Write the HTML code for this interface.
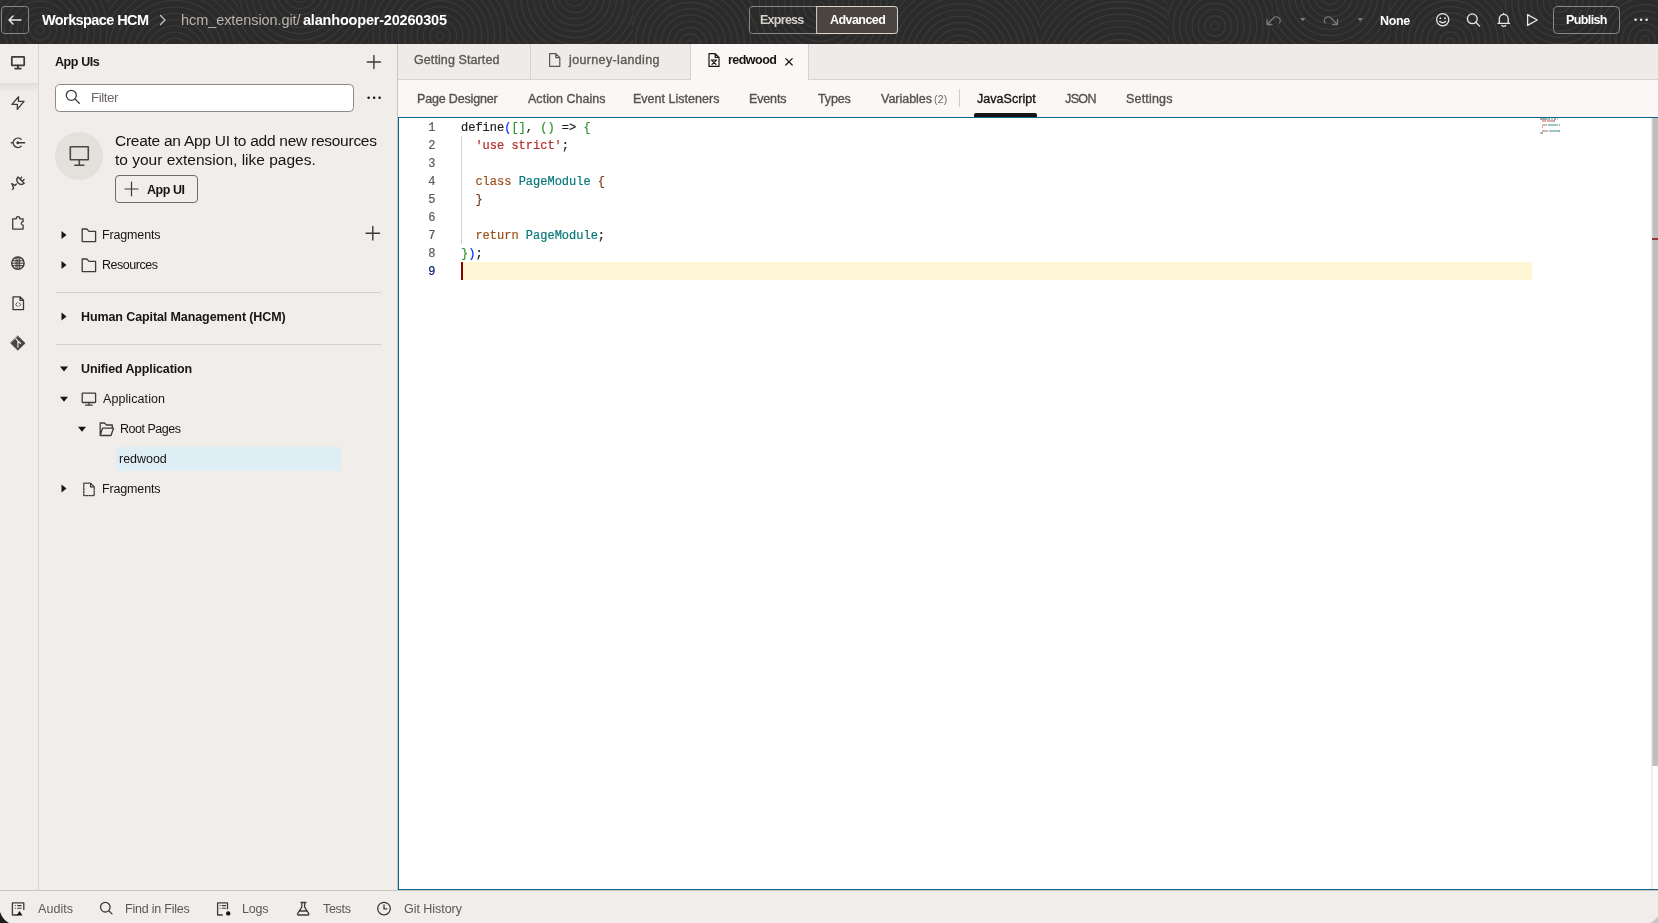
<!DOCTYPE html>
<html><head><meta charset="utf-8"><style>
*{margin:0;padding:0;box-sizing:border-box}
html,body{width:1658px;height:923px;overflow:hidden;background:#f0edeb;font-family:"Liberation Sans", sans-serif}
.a{position:absolute}
.t{position:absolute;white-space:nowrap;will-change:transform}
svg{position:absolute;overflow:visible}
</style></head><body>
<!-- header -->
<div class="a" style="left:0;top:0;width:1658px;height:44px;background:#2b2b2b"></div>
<svg class="a" style="left:0;top:0" width="1658" height="44" viewBox="0 0 1658 44"><defs><clipPath id="c0"><rect x="0" y="0" width="108" height="44"/></clipPath><clipPath id="c1"><rect x="108" y="0" width="130" height="44"/></clipPath><clipPath id="c2"><rect x="238" y="0" width="132" height="44"/></clipPath><clipPath id="c3"><rect x="370" y="0" width="138" height="44"/></clipPath><clipPath id="c4"><rect x="508" y="0" width="125" height="44"/></clipPath><clipPath id="c5"><rect x="632" y="0" width="122" height="44"/></clipPath><clipPath id="c6"><rect x="755" y="0" width="135" height="44"/></clipPath><clipPath id="c7"><rect x="890" y="0" width="150" height="44"/></clipPath><clipPath id="c8"><rect x="1040" y="0" width="128" height="44"/></clipPath><clipPath id="c9"><rect x="1168" y="0" width="105" height="44"/></clipPath><clipPath id="c10"><rect x="1272" y="0" width="118" height="44"/></clipPath><clipPath id="c11"><rect x="1390" y="0" width="115" height="44"/></clipPath><clipPath id="c12"><rect x="1505" y="0" width="98" height="44"/></clipPath><clipPath id="c13"><rect x="1602" y="0" width="56" height="44"/></clipPath></defs><g fill="none" stroke="#383838" stroke-width="1.4"><g clip-path="url(#c0)"><circle cx="40" cy="30" r="4.0"/><circle cx="40" cy="30" r="10.3"/><circle cx="40" cy="30" r="16.6"/><circle cx="40" cy="30" r="22.9"/><circle cx="40" cy="30" r="29.2"/><circle cx="40" cy="30" r="35.5"/><circle cx="40" cy="30" r="41.8"/><circle cx="40" cy="30" r="48.1"/><circle cx="40" cy="30" r="54.4"/><circle cx="40" cy="30" r="60.7"/><circle cx="40" cy="30" r="67.0"/><circle cx="40" cy="30" r="73.3"/><circle cx="40" cy="30" r="79.6"/><circle cx="40" cy="30" r="85.9"/><circle cx="40" cy="30" r="92.2"/><circle cx="40" cy="30" r="98.5"/><circle cx="40" cy="30" r="104.8"/><circle cx="40" cy="30" r="111.1"/><circle cx="40" cy="30" r="117.4"/><circle cx="40" cy="30" r="123.7"/><circle cx="40" cy="30" r="130.0"/><circle cx="40" cy="30" r="136.3"/><circle cx="40" cy="30" r="142.6"/><circle cx="40" cy="30" r="148.9"/><circle cx="40" cy="30" r="155.2"/></g><g clip-path="url(#c1)"><circle cx="175" cy="55" r="4.0"/><circle cx="175" cy="55" r="10.3"/><circle cx="175" cy="55" r="16.6"/><circle cx="175" cy="55" r="22.9"/><circle cx="175" cy="55" r="29.2"/><circle cx="175" cy="55" r="35.5"/><circle cx="175" cy="55" r="41.8"/><circle cx="175" cy="55" r="48.1"/><circle cx="175" cy="55" r="54.4"/><circle cx="175" cy="55" r="60.7"/><circle cx="175" cy="55" r="67.0"/><circle cx="175" cy="55" r="73.3"/><circle cx="175" cy="55" r="79.6"/><circle cx="175" cy="55" r="85.9"/><circle cx="175" cy="55" r="92.2"/><circle cx="175" cy="55" r="98.5"/><circle cx="175" cy="55" r="104.8"/><circle cx="175" cy="55" r="111.1"/><circle cx="175" cy="55" r="117.4"/><circle cx="175" cy="55" r="123.7"/><circle cx="175" cy="55" r="130.0"/><circle cx="175" cy="55" r="136.3"/><circle cx="175" cy="55" r="142.6"/><circle cx="175" cy="55" r="148.9"/><circle cx="175" cy="55" r="155.2"/></g><g clip-path="url(#c2)"><circle cx="300" cy="-8" r="4.0"/><circle cx="300" cy="-8" r="10.3"/><circle cx="300" cy="-8" r="16.6"/><circle cx="300" cy="-8" r="22.9"/><circle cx="300" cy="-8" r="29.2"/><circle cx="300" cy="-8" r="35.5"/><circle cx="300" cy="-8" r="41.8"/><circle cx="300" cy="-8" r="48.1"/><circle cx="300" cy="-8" r="54.4"/><circle cx="300" cy="-8" r="60.7"/><circle cx="300" cy="-8" r="67.0"/><circle cx="300" cy="-8" r="73.3"/><circle cx="300" cy="-8" r="79.6"/><circle cx="300" cy="-8" r="85.9"/><circle cx="300" cy="-8" r="92.2"/><circle cx="300" cy="-8" r="98.5"/><circle cx="300" cy="-8" r="104.8"/><circle cx="300" cy="-8" r="111.1"/><circle cx="300" cy="-8" r="117.4"/><circle cx="300" cy="-8" r="123.7"/><circle cx="300" cy="-8" r="130.0"/><circle cx="300" cy="-8" r="136.3"/><circle cx="300" cy="-8" r="142.6"/><circle cx="300" cy="-8" r="148.9"/><circle cx="300" cy="-8" r="155.2"/></g><g clip-path="url(#c3)"><circle cx="440" cy="36" r="4.0"/><circle cx="440" cy="36" r="10.3"/><circle cx="440" cy="36" r="16.6"/><circle cx="440" cy="36" r="22.9"/><circle cx="440" cy="36" r="29.2"/><circle cx="440" cy="36" r="35.5"/><circle cx="440" cy="36" r="41.8"/><circle cx="440" cy="36" r="48.1"/><circle cx="440" cy="36" r="54.4"/><circle cx="440" cy="36" r="60.7"/><circle cx="440" cy="36" r="67.0"/><circle cx="440" cy="36" r="73.3"/><circle cx="440" cy="36" r="79.6"/><circle cx="440" cy="36" r="85.9"/><circle cx="440" cy="36" r="92.2"/><circle cx="440" cy="36" r="98.5"/><circle cx="440" cy="36" r="104.8"/><circle cx="440" cy="36" r="111.1"/><circle cx="440" cy="36" r="117.4"/><circle cx="440" cy="36" r="123.7"/><circle cx="440" cy="36" r="130.0"/><circle cx="440" cy="36" r="136.3"/><circle cx="440" cy="36" r="142.6"/><circle cx="440" cy="36" r="148.9"/><circle cx="440" cy="36" r="155.2"/></g><g clip-path="url(#c4)"><circle cx="575" cy="-4" r="4.0"/><circle cx="575" cy="-4" r="10.3"/><circle cx="575" cy="-4" r="16.6"/><circle cx="575" cy="-4" r="22.9"/><circle cx="575" cy="-4" r="29.2"/><circle cx="575" cy="-4" r="35.5"/><circle cx="575" cy="-4" r="41.8"/><circle cx="575" cy="-4" r="48.1"/><circle cx="575" cy="-4" r="54.4"/><circle cx="575" cy="-4" r="60.7"/><circle cx="575" cy="-4" r="67.0"/><circle cx="575" cy="-4" r="73.3"/><circle cx="575" cy="-4" r="79.6"/><circle cx="575" cy="-4" r="85.9"/><circle cx="575" cy="-4" r="92.2"/><circle cx="575" cy="-4" r="98.5"/><circle cx="575" cy="-4" r="104.8"/><circle cx="575" cy="-4" r="111.1"/><circle cx="575" cy="-4" r="117.4"/><circle cx="575" cy="-4" r="123.7"/><circle cx="575" cy="-4" r="130.0"/><circle cx="575" cy="-4" r="136.3"/><circle cx="575" cy="-4" r="142.6"/><circle cx="575" cy="-4" r="148.9"/><circle cx="575" cy="-4" r="155.2"/></g><g clip-path="url(#c5)"><circle cx="690" cy="44" r="4.0"/><circle cx="690" cy="44" r="10.3"/><circle cx="690" cy="44" r="16.6"/><circle cx="690" cy="44" r="22.9"/><circle cx="690" cy="44" r="29.2"/><circle cx="690" cy="44" r="35.5"/><circle cx="690" cy="44" r="41.8"/><circle cx="690" cy="44" r="48.1"/><circle cx="690" cy="44" r="54.4"/><circle cx="690" cy="44" r="60.7"/><circle cx="690" cy="44" r="67.0"/><circle cx="690" cy="44" r="73.3"/><circle cx="690" cy="44" r="79.6"/><circle cx="690" cy="44" r="85.9"/><circle cx="690" cy="44" r="92.2"/><circle cx="690" cy="44" r="98.5"/><circle cx="690" cy="44" r="104.8"/><circle cx="690" cy="44" r="111.1"/><circle cx="690" cy="44" r="117.4"/><circle cx="690" cy="44" r="123.7"/><circle cx="690" cy="44" r="130.0"/><circle cx="690" cy="44" r="136.3"/><circle cx="690" cy="44" r="142.6"/><circle cx="690" cy="44" r="148.9"/><circle cx="690" cy="44" r="155.2"/></g><g clip-path="url(#c6)"><circle cx="820" cy="6" r="4.0"/><circle cx="820" cy="6" r="10.3"/><circle cx="820" cy="6" r="16.6"/><circle cx="820" cy="6" r="22.9"/><circle cx="820" cy="6" r="29.2"/><circle cx="820" cy="6" r="35.5"/><circle cx="820" cy="6" r="41.8"/><circle cx="820" cy="6" r="48.1"/><circle cx="820" cy="6" r="54.4"/><circle cx="820" cy="6" r="60.7"/><circle cx="820" cy="6" r="67.0"/><circle cx="820" cy="6" r="73.3"/><circle cx="820" cy="6" r="79.6"/><circle cx="820" cy="6" r="85.9"/><circle cx="820" cy="6" r="92.2"/><circle cx="820" cy="6" r="98.5"/><circle cx="820" cy="6" r="104.8"/><circle cx="820" cy="6" r="111.1"/><circle cx="820" cy="6" r="117.4"/><circle cx="820" cy="6" r="123.7"/><circle cx="820" cy="6" r="130.0"/><circle cx="820" cy="6" r="136.3"/><circle cx="820" cy="6" r="142.6"/><circle cx="820" cy="6" r="148.9"/><circle cx="820" cy="6" r="155.2"/></g><g clip-path="url(#c7)"><circle cx="960" cy="58" r="4.0"/><circle cx="960" cy="58" r="10.3"/><circle cx="960" cy="58" r="16.6"/><circle cx="960" cy="58" r="22.9"/><circle cx="960" cy="58" r="29.2"/><circle cx="960" cy="58" r="35.5"/><circle cx="960" cy="58" r="41.8"/><circle cx="960" cy="58" r="48.1"/><circle cx="960" cy="58" r="54.4"/><circle cx="960" cy="58" r="60.7"/><circle cx="960" cy="58" r="67.0"/><circle cx="960" cy="58" r="73.3"/><circle cx="960" cy="58" r="79.6"/><circle cx="960" cy="58" r="85.9"/><circle cx="960" cy="58" r="92.2"/><circle cx="960" cy="58" r="98.5"/><circle cx="960" cy="58" r="104.8"/><circle cx="960" cy="58" r="111.1"/><circle cx="960" cy="58" r="117.4"/><circle cx="960" cy="58" r="123.7"/><circle cx="960" cy="58" r="130.0"/><circle cx="960" cy="58" r="136.3"/><circle cx="960" cy="58" r="142.6"/><circle cx="960" cy="58" r="148.9"/><circle cx="960" cy="58" r="155.2"/></g><g clip-path="url(#c8)"><circle cx="1120" cy="75" r="4.0"/><circle cx="1120" cy="75" r="10.3"/><circle cx="1120" cy="75" r="16.6"/><circle cx="1120" cy="75" r="22.9"/><circle cx="1120" cy="75" r="29.2"/><circle cx="1120" cy="75" r="35.5"/><circle cx="1120" cy="75" r="41.8"/><circle cx="1120" cy="75" r="48.1"/><circle cx="1120" cy="75" r="54.4"/><circle cx="1120" cy="75" r="60.7"/><circle cx="1120" cy="75" r="67.0"/><circle cx="1120" cy="75" r="73.3"/><circle cx="1120" cy="75" r="79.6"/><circle cx="1120" cy="75" r="85.9"/><circle cx="1120" cy="75" r="92.2"/><circle cx="1120" cy="75" r="98.5"/><circle cx="1120" cy="75" r="104.8"/><circle cx="1120" cy="75" r="111.1"/><circle cx="1120" cy="75" r="117.4"/><circle cx="1120" cy="75" r="123.7"/><circle cx="1120" cy="75" r="130.0"/><circle cx="1120" cy="75" r="136.3"/><circle cx="1120" cy="75" r="142.6"/><circle cx="1120" cy="75" r="148.9"/><circle cx="1120" cy="75" r="155.2"/></g><g clip-path="url(#c9)"><circle cx="1215" cy="26" r="4.0"/><circle cx="1215" cy="26" r="10.3"/><circle cx="1215" cy="26" r="16.6"/><circle cx="1215" cy="26" r="22.9"/><circle cx="1215" cy="26" r="29.2"/><circle cx="1215" cy="26" r="35.5"/><circle cx="1215" cy="26" r="41.8"/><circle cx="1215" cy="26" r="48.1"/><circle cx="1215" cy="26" r="54.4"/><circle cx="1215" cy="26" r="60.7"/><circle cx="1215" cy="26" r="67.0"/><circle cx="1215" cy="26" r="73.3"/><circle cx="1215" cy="26" r="79.6"/><circle cx="1215" cy="26" r="85.9"/><circle cx="1215" cy="26" r="92.2"/><circle cx="1215" cy="26" r="98.5"/><circle cx="1215" cy="26" r="104.8"/><circle cx="1215" cy="26" r="111.1"/><circle cx="1215" cy="26" r="117.4"/><circle cx="1215" cy="26" r="123.7"/><circle cx="1215" cy="26" r="130.0"/><circle cx="1215" cy="26" r="136.3"/><circle cx="1215" cy="26" r="142.6"/><circle cx="1215" cy="26" r="148.9"/><circle cx="1215" cy="26" r="155.2"/></g><g clip-path="url(#c10)"><circle cx="1330" cy="-6" r="4.0"/><circle cx="1330" cy="-6" r="10.3"/><circle cx="1330" cy="-6" r="16.6"/><circle cx="1330" cy="-6" r="22.9"/><circle cx="1330" cy="-6" r="29.2"/><circle cx="1330" cy="-6" r="35.5"/><circle cx="1330" cy="-6" r="41.8"/><circle cx="1330" cy="-6" r="48.1"/><circle cx="1330" cy="-6" r="54.4"/><circle cx="1330" cy="-6" r="60.7"/><circle cx="1330" cy="-6" r="67.0"/><circle cx="1330" cy="-6" r="73.3"/><circle cx="1330" cy="-6" r="79.6"/><circle cx="1330" cy="-6" r="85.9"/><circle cx="1330" cy="-6" r="92.2"/><circle cx="1330" cy="-6" r="98.5"/><circle cx="1330" cy="-6" r="104.8"/><circle cx="1330" cy="-6" r="111.1"/><circle cx="1330" cy="-6" r="117.4"/><circle cx="1330" cy="-6" r="123.7"/><circle cx="1330" cy="-6" r="130.0"/><circle cx="1330" cy="-6" r="136.3"/><circle cx="1330" cy="-6" r="142.6"/><circle cx="1330" cy="-6" r="148.9"/><circle cx="1330" cy="-6" r="155.2"/></g><g clip-path="url(#c11)"><circle cx="1450" cy="42" r="4.0"/><circle cx="1450" cy="42" r="10.3"/><circle cx="1450" cy="42" r="16.6"/><circle cx="1450" cy="42" r="22.9"/><circle cx="1450" cy="42" r="29.2"/><circle cx="1450" cy="42" r="35.5"/><circle cx="1450" cy="42" r="41.8"/><circle cx="1450" cy="42" r="48.1"/><circle cx="1450" cy="42" r="54.4"/><circle cx="1450" cy="42" r="60.7"/><circle cx="1450" cy="42" r="67.0"/><circle cx="1450" cy="42" r="73.3"/><circle cx="1450" cy="42" r="79.6"/><circle cx="1450" cy="42" r="85.9"/><circle cx="1450" cy="42" r="92.2"/><circle cx="1450" cy="42" r="98.5"/><circle cx="1450" cy="42" r="104.8"/><circle cx="1450" cy="42" r="111.1"/><circle cx="1450" cy="42" r="117.4"/><circle cx="1450" cy="42" r="123.7"/><circle cx="1450" cy="42" r="130.0"/><circle cx="1450" cy="42" r="136.3"/><circle cx="1450" cy="42" r="142.6"/><circle cx="1450" cy="42" r="148.9"/><circle cx="1450" cy="42" r="155.2"/></g><g clip-path="url(#c12)"><circle cx="1560" cy="2" r="4.0"/><circle cx="1560" cy="2" r="10.3"/><circle cx="1560" cy="2" r="16.6"/><circle cx="1560" cy="2" r="22.9"/><circle cx="1560" cy="2" r="29.2"/><circle cx="1560" cy="2" r="35.5"/><circle cx="1560" cy="2" r="41.8"/><circle cx="1560" cy="2" r="48.1"/><circle cx="1560" cy="2" r="54.4"/><circle cx="1560" cy="2" r="60.7"/><circle cx="1560" cy="2" r="67.0"/><circle cx="1560" cy="2" r="73.3"/><circle cx="1560" cy="2" r="79.6"/><circle cx="1560" cy="2" r="85.9"/><circle cx="1560" cy="2" r="92.2"/><circle cx="1560" cy="2" r="98.5"/><circle cx="1560" cy="2" r="104.8"/><circle cx="1560" cy="2" r="111.1"/><circle cx="1560" cy="2" r="117.4"/><circle cx="1560" cy="2" r="123.7"/><circle cx="1560" cy="2" r="130.0"/><circle cx="1560" cy="2" r="136.3"/><circle cx="1560" cy="2" r="142.6"/><circle cx="1560" cy="2" r="148.9"/><circle cx="1560" cy="2" r="155.2"/></g><g clip-path="url(#c13)"><circle cx="1645" cy="40" r="4.0"/><circle cx="1645" cy="40" r="10.3"/><circle cx="1645" cy="40" r="16.6"/><circle cx="1645" cy="40" r="22.9"/><circle cx="1645" cy="40" r="29.2"/><circle cx="1645" cy="40" r="35.5"/><circle cx="1645" cy="40" r="41.8"/><circle cx="1645" cy="40" r="48.1"/><circle cx="1645" cy="40" r="54.4"/><circle cx="1645" cy="40" r="60.7"/><circle cx="1645" cy="40" r="67.0"/><circle cx="1645" cy="40" r="73.3"/><circle cx="1645" cy="40" r="79.6"/><circle cx="1645" cy="40" r="85.9"/><circle cx="1645" cy="40" r="92.2"/><circle cx="1645" cy="40" r="98.5"/><circle cx="1645" cy="40" r="104.8"/><circle cx="1645" cy="40" r="111.1"/><circle cx="1645" cy="40" r="117.4"/><circle cx="1645" cy="40" r="123.7"/><circle cx="1645" cy="40" r="130.0"/><circle cx="1645" cy="40" r="136.3"/><circle cx="1645" cy="40" r="142.6"/><circle cx="1645" cy="40" r="148.9"/><circle cx="1645" cy="40" r="155.2"/></g></g></svg>
<!-- left rail -->
<div class="a" style="left:0;top:44px;width:39px;height:846px;background:#f0edeb;border-right:1px solid #d9d5d0"></div>
<div class="a" style="left:0;top:83px;width:38px;height:1px;background:#e2deda"></div><div class="a" style="left:0;top:84px;width:38px;height:9px;background:linear-gradient(rgba(0,0,0,0.055),rgba(0,0,0,0))"></div>
<!-- left panel -->
<div class="a" style="left:39px;top:44px;width:358px;height:846px;background:#f0edeb"></div>
<div class="a" style="left:397px;top:44px;width:1px;height:846px;background:#c9c5c0"></div>
<!-- tabs row -->
<div class="a" style="left:398px;top:44px;width:1260px;height:36px;background:#eeebe8;border-bottom:1px solid #d6d2cd"></div>
<div class="a" style="left:530px;top:44px;width:1px;height:35px;background:#d6d2cd"></div>
<div class="a" style="left:690px;top:44px;width:119px;height:36px;background:#faf7f6;border-left:1px solid #d6d2cd;border-right:1px solid #d6d2cd"></div>
<!-- subtabs -->
<div class="a" style="left:398px;top:80px;width:1260px;height:37px;background:#faf7f6"></div>
<div class="a" style="left:959px;top:89px;width:1px;height:18px;background:#cfcbc6"></div>
<div class="a" style="left:974px;top:113px;width:63px;height:3.5px;background:#161513;border-radius:2px 2px 0 0"></div>
<!-- editor -->
<div class="a" style="left:398px;top:117px;width:1260px;height:773px;background:#ffffff;border:1px solid #0f668a;border-right:none"></div>
<!-- footer -->
<div class="a" style="left:0;top:890px;width:1658px;height:33px;background:#f0edeb;border-top:1px solid #c9c5c0"></div>
<svg class="a" style="left:0;top:0" width="1658" height="923" viewBox="0 0 1658 923" fill="none" stroke-linecap="round" stroke-linejoin="round">
<!-- header -->
<rect x="1.5" y="6.5" width="27" height="27" rx="3" stroke="#8d8882" stroke-width="1"/>
<path d="M21 20H9M13 16L9 20L13 24" stroke="#ece8e3" stroke-width="1.5"/>
<path d="M160.5 15.5L165 20L160.5 24.5" stroke="#c9c3bc" stroke-width="1.3"/>
<rect x="749.5" y="6.5" width="148" height="27" rx="3" stroke="#8d8882"/>
<path d="M817 6.5H894.5A3 3 0 0 1 897.5 9.5V30.5A3 3 0 0 1 894.5 33.5H817Z" fill="#4a4541" stroke="#d9d3cb"/>
<path d="M1267 19.5V24.5H1272M1267.5 24L1273 18.5A3.9 3.9 0 0 1 1279.5 23" stroke="#7d7975" stroke-width="1.3"/>
<path d="M1300 18H1305.5L1302.75 21.5Z" fill="#7d7975"/>
<path d="M1337.5 19.5V24.5H1332.5M1337 24L1331.5 18.5A3.9 3.9 0 0 0 1325 23" stroke="#7d7975" stroke-width="1.3"/>
<path d="M1357.5 18H1363L1360.25 21.5Z" fill="#7d7975"/>
<circle cx="1442.7" cy="19.7" r="6.1" stroke="#ece8e3" stroke-width="1.3"/>
<circle cx="1440.4" cy="18.2" r="0.9" fill="#ece8e3" stroke="none"/>
<circle cx="1445" cy="18.2" r="0.9" fill="#ece8e3" stroke="none"/>
<path d="M1439.6 21.3Q1442.7 24.2 1445.8 21.3" stroke="#ece8e3" stroke-width="1.2"/>
<circle cx="1472.3" cy="18.8" r="4.9" stroke="#ece8e3" stroke-width="1.3"/>
<path d="M1475.8 22.3L1479.6 26.1" stroke="#ece8e3" stroke-width="1.3"/>
<path d="M1498 23.3H1509.5M1499.3 23.3V18.8A4.45 4.45 0 0 1 1508.2 18.8V23.3M1501.8 25.5Q1503.75 27.2 1505.7 25.5M1503.75 13.5V14.3" stroke="#ece8e3" stroke-width="1.3"/>
<path d="M1527.6 14.6L1537.2 20L1527.6 25.4Z" stroke="#ece8e3" stroke-width="1.3"/>
<rect x="1553.5" y="6.5" width="66" height="27" rx="4" stroke="#8d8882"/>
<circle cx="1635.6" cy="19.8" r="1.25" fill="#ece8e3" stroke="none"/>
<circle cx="1641.1" cy="19.8" r="1.25" fill="#ece8e3" stroke="none"/>
<circle cx="1646.6" cy="19.8" r="1.25" fill="#ece8e3" stroke="none"/>
<!-- left rail -->
<g stroke="#3d3a37" stroke-width="1.4">
<rect x="11.8" y="56.8" width="12.4" height="8.6" rx="0.5" stroke-width="1.7"/>
<path d="M18 65.5V68.4M15.2 68.6H20.8" stroke-width="1.8"/>
<path d="M18.6 96.8L11.9 104.4H17.4L17.3 109.4L24 101.3H18.4Z" stroke-width="1.3"/>
<path d="M21.1 139.3A4.7 4.7 0 1 0 21.1 146.3M11.3 142.8H13.1M17.8 142.8H24.6" stroke-width="1.4"/>
<circle cx="17.8" cy="142.8" r="1.5" fill="#3d3a37" stroke="none"/>
<path d="M18 177L24.2 183.2A4.4 4.4 0 0 1 18 177ZM19.9 178.9L21.6 177.2M22.3 181.3L24 179.6M16.4 184.1L15 185.5L11.8 183.6L13.6 188.1L12.5 189.4" stroke-width="1.4"/>
<path d="M12.7 218.8H16.3A1.8 1.8 0 1 1 19.8 218.8H23.1V221.6A1.7 1.7 0 1 0 23.1 225.1V229.1H12.7Z" stroke-width="1.3"/>
<circle cx="17.9" cy="263.2" r="6.2" stroke-width="1.4"/>
<path d="M11.9 263.2H23.9M17.9 257.2V269.2M16.1 257.5V268.9M19.7 257.5V268.9M12.5 260.8H23.3M12.5 265.6H23.3" stroke-width="1"/>
<path d="M13 296.8H20L23.5 300.3V309.6H13ZM20 296.8V300.3H23.5" stroke-width="1.3"/>
<path d="M17.2 302.8L15.7 304.5L17.2 306.2M19.2 302.8L20.7 304.5L19.2 306.2" stroke-width="0.9"/>
</g>
<path d="M17.9 336.2L25.1 343.2L17.9 350.2L10.7 343.2Z" fill="#4a4642" stroke="#4a4642" stroke-width="0.8"/>
<path d="M15.7 338.6L17.9 340.8V347.3M17.9 340.8L20.6 343.5" stroke="#f0edeb" stroke-width="1.1"/>
<!-- left panel -->
<rect x="56" y="292" width="325" height="1" fill="#d3cfca"/>
<rect x="56" y="344" width="325" height="1" fill="#d3cfca"/>
<rect x="116" y="447" width="225" height="24" fill="#dfedf5"/>
<g stroke="#3d3a37" stroke-width="1.4">
<path d="M367.3 62H380.5M373.9 55.4V68.6"/>
<path d="M366 233.2H379.6M372.8 226.4V240"/>
</g>
<rect x="55.5" y="84.5" width="298" height="27" rx="4" fill="#ffffff" stroke="#8f8a85"/>
<circle cx="71.3" cy="95.3" r="5" stroke="#3d3a37" stroke-width="1.3"/>
<path d="M74.9 98.9L79.3 103.3" stroke="#3d3a37" stroke-width="1.3"/>
<circle cx="368.6" cy="97.8" r="1.25" fill="#161513"/>
<circle cx="374.1" cy="97.8" r="1.25" fill="#161513"/>
<circle cx="379.6" cy="97.8" r="1.25" fill="#161513"/>
<circle cx="79" cy="156" r="24" fill="#e4e1dd"/>
<g stroke="#4a4642" stroke-width="1.6">
<rect x="70.3" y="146.8" width="18" height="13" rx="0.5"/>
<path d="M79.3 159.8V164.8M74.8 165.2H83.8"/>
</g>
<rect x="115.5" y="175.5" width="82" height="27" rx="3.5" stroke="#6f6b67"/>
<path d="M125 189H138M131.5 182.2V195.8" stroke="#3d3a37" stroke-width="1.2"/>
<g fill="#161513" stroke="none">
<path d="M61.5 231L66.5 235L61.5 239Z"/>
<path d="M61.5 261L66.5 265L61.5 269Z"/>
<path d="M61.5 312.5L66.5 316.5L61.5 320.5Z"/>
<path d="M60 366.5H68L64 371.5Z"/>
<path d="M60 396.8H68L64 401.8Z"/>
<path d="M78 426.8H86L82 431.8Z"/>
<path d="M61.5 484.5L66.5 488.5L61.5 492.5Z"/>
</g>
<g stroke="#3d3a37" stroke-width="1.3">
<path d="M82.2 229V241.6H95.6V231.4H89L86.8 229Z"/>
<path d="M82.2 259V271.6H95.6V261.4H89L86.8 259Z"/>
<rect x="82.2" y="393.2" width="13.4" height="9.3" rx="0.5"/>
<path d="M88.9 402.5V405.2M85.6 405.2H92.2"/>
<path d="M100.2 435.5V423H104.5L106.5 425H112.3V428.2M100.2 435.5L102.5 428.2H113.5L111 435.5Z"/>
</g>
<path d="M83.8 495.6V483.2H90.5L94.2 486.9V495.6Z" stroke="#3d3a37" stroke-width="1.3" stroke-dasharray="1.6 1.2"/>
<path d="M90.5 483.2V486.9H94.2" stroke="#3d3a37" stroke-width="1.1"/>
<!-- tabs -->
<path d="M549.6 53.6H555.8L559.8 57.6V66.4H549.6ZM555.8 53.6V57.6H559.8" stroke="#5c5752" stroke-width="1.2"/>
<path d="M709 53.6H715.2L719 57.4V66.4H709ZM715.2 53.6V57.4H719" stroke="#161513" stroke-width="1.2"/>
<path d="M711.2 60H716.6M712 60.6L716 64.4M716 60.6L712 64.4" stroke="#161513" stroke-width="1.2"/>
<path d="M785.8 58.6L792.2 65M792.2 58.6L785.8 65" stroke="#161513" stroke-width="1.2"/>
<!-- footer -->
<g stroke="#3d3a37" stroke-width="1.3">
<path d="M17.2 915H12.4V902.8H23.8V909.5"/>
<path d="M15.3 905.6H15.4M17.6 905.6H21.2M15.3 908.2H15.4M17.6 908.2H21.2" stroke-width="1.1"/>
<circle cx="105.3" cy="907.2" r="4.8"/>
<path d="M108.8 910.7L112 913.9"/>
<path d="M227.5 908.8V902.8H217.6V915H222.3"/>
<path d="M220 905.6H220.1M222.2 905.6H225.5M220 908.2H220.1M222.2 908.2H225.5" stroke-width="1.1"/>
<path d="M301 902.5H306M301.8 902.5V907.2L297.6 913.6A1 1 0 0 0 298.5 915H307.9A1 1 0 0 0 308.8 913.6L304.6 907.2V902.5M299.5 911H306.9"/>
<circle cx="384" cy="908.6" r="6.3"/>
<path d="M384 905V908.9H386.8"/>
</g>
<path d="M19.5 911L22.5 915.5H16.5Z" fill="#161513"/>
<circle cx="228.2" cy="913.4" r="2.2" fill="#161513"/>
<!-- editor extras -->
<rect x="1652" y="118" width="6" height="648" fill="#bfbfbf"/>
<rect x="1651.5" y="118" width="1" height="771" fill="#dedede"/>
<rect x="1652" y="238" width="6" height="2" fill="#8d3c3c"/>
<rect x="461" y="262" width="1071" height="18" fill="#fef6d5"/>
<rect x="461" y="136" width="1" height="108" fill="#d3d3d3"/>
<rect x="461" y="262" width="2" height="18" fill="#8b0000"/>
<!-- corners -->
<path d="M0 912Q3 920 9 923H0Z" fill="#1d1c1b"/>
<path d="M1658 916Q1655 921 1650 923H1658Z" fill="#c4c4c4"/>
</svg>
<div class="a" style="left:400px;top:118.7px;font-family:'Liberation Mono',monospace;font-size:12px;line-height:18px;will-change:transform;-webkit-text-stroke:0.2px">
<div style="position:relative;height:18px;white-space:pre"><span style="position:absolute;left:0;width:35.5px;text-align:right;color:#5a5a5a">1</span><span style="position:absolute;left:61px"><span style="color:#1e1e1e">define</span><span style="color:#0431fa">(</span><span style="color:#319331">[]</span><span style="color:#1e1e1e">, </span><span style="color:#319331">()</span><span style="color:#1e1e1e"> =&gt; </span><span style="color:#319331">{</span></span></div>
<div style="position:relative;height:18px;white-space:pre"><span style="position:absolute;left:0;width:35.5px;text-align:right;color:#5a5a5a">2</span><span style="position:absolute;left:61px">  <span style="color:#b52a2a">'use strict'</span><span style="color:#1e1e1e">;</span></span></div>
<div style="position:relative;height:18px;white-space:pre"><span style="position:absolute;left:0;width:35.5px;text-align:right;color:#5a5a5a">3</span><span style="position:absolute;left:61px"></span></div>
<div style="position:relative;height:18px;white-space:pre"><span style="position:absolute;left:0;width:35.5px;text-align:right;color:#5a5a5a">4</span><span style="position:absolute;left:61px">  <span style="color:#9a4f1c">class</span> <span style="color:#067878">PageModule</span> <span style="color:#7b3814">{</span></span></div>
<div style="position:relative;height:18px;white-space:pre"><span style="position:absolute;left:0;width:35.5px;text-align:right;color:#5a5a5a">5</span><span style="position:absolute;left:61px">  <span style="color:#7b3814">}</span></span></div>
<div style="position:relative;height:18px;white-space:pre"><span style="position:absolute;left:0;width:35.5px;text-align:right;color:#5a5a5a">6</span><span style="position:absolute;left:61px"></span></div>
<div style="position:relative;height:18px;white-space:pre"><span style="position:absolute;left:0;width:35.5px;text-align:right;color:#5a5a5a">7</span><span style="position:absolute;left:61px">  <span style="color:#9a4f1c">return</span> <span style="color:#067878">PageModule</span><span style="color:#1e1e1e">;</span></span></div>
<div style="position:relative;height:18px;white-space:pre"><span style="position:absolute;left:0;width:35.5px;text-align:right;color:#5a5a5a">8</span><span style="position:absolute;left:61px"><span style="color:#319331">}</span><span style="color:#0431fa">)</span><span style="color:#1e1e1e">;</span></span></div>
<div style="position:relative;height:18px;white-space:pre"><span style="position:absolute;left:0;width:35.5px;text-align:right;color:#0b216f">9</span><span style="position:absolute;left:61px"></span></div>
</div>
<div class="a" style="left:1540px;top:118px;width:6px;height:2px;background:#1e1e1e;opacity:0.4"></div><div class="a" style="left:1546px;top:118px;width:1px;height:2px;background:#0431fa;opacity:0.4"></div><div class="a" style="left:1547px;top:118px;width:2px;height:2px;background:#319331;opacity:0.4"></div><div class="a" style="left:1549px;top:118px;width:1px;height:2px;background:#1e1e1e;opacity:0.4"></div><div class="a" style="left:1551px;top:118px;width:2px;height:2px;background:#319331;opacity:0.4"></div><div class="a" style="left:1554px;top:118px;width:2px;height:2px;background:#1e1e1e;opacity:0.4"></div><div class="a" style="left:1557px;top:118px;width:1px;height:2px;background:#319331;opacity:0.4"></div><div class="a" style="left:1542px;top:120px;width:4px;height:2px;background:#b52a2a;opacity:0.4"></div><div class="a" style="left:1547px;top:120px;width:7px;height:2px;background:#b52a2a;opacity:0.4"></div><div class="a" style="left:1554px;top:120px;width:1px;height:2px;background:#1e1e1e;opacity:0.4"></div><div class="a" style="left:1542px;top:124px;width:5px;height:2px;background:#9a4f1c;opacity:0.4"></div><div class="a" style="left:1548px;top:124px;width:10px;height:2px;background:#067878;opacity:0.4"></div><div class="a" style="left:1559px;top:124px;width:1px;height:2px;background:#7b3814;opacity:0.4"></div><div class="a" style="left:1542px;top:126px;width:1px;height:2px;background:#7b3814;opacity:0.4"></div><div class="a" style="left:1542px;top:130px;width:6px;height:2px;background:#9a4f1c;opacity:0.4"></div><div class="a" style="left:1549px;top:130px;width:10px;height:2px;background:#067878;opacity:0.4"></div><div class="a" style="left:1559px;top:130px;width:1px;height:2px;background:#1e1e1e;opacity:0.4"></div><div class="a" style="left:1540px;top:132px;width:1px;height:2px;background:#319331;opacity:0.4"></div><div class="a" style="left:1541px;top:132px;width:1px;height:2px;background:#0431fa;opacity:0.4"></div><div class="a" style="left:1542px;top:132px;width:1px;height:2px;background:#1e1e1e;opacity:0.4"></div>
<div class="t" id="t0" style="left:42.3px;top:12.9px;font-size:14.5px;line-height:14.5px;font-weight:700;color:#ffffff;letter-spacing:-0.596px">Workspace HCM</div>
<div class="t" id="t1" style="left:180.8px;top:13.2px;font-size:14.5px;line-height:14.5px;font-weight:400;color:#b9b3ac;letter-spacing:-0.077px">hcm_extension.git/</div>
<div class="t" id="t2" style="left:303.3px;top:13.2px;font-size:14.5px;line-height:14.5px;font-weight:700;color:#ffffff;letter-spacing:-0.194px">alanhooper-20260305</div>
<div class="t" id="t3" style="left:760.3px;top:14.0px;font-size:12.5px;line-height:12.5px;font-weight:700;color:#d6d1cb;letter-spacing:-0.726px">Express</div>
<div class="t" id="t4" style="left:830.2px;top:14.0px;font-size:12.5px;line-height:12.5px;font-weight:700;color:#ffffff;letter-spacing:-0.564px">Advanced</div>
<div class="t" id="t5" style="left:1379.7px;top:14.5px;font-size:12.5px;line-height:12.5px;font-weight:700;color:#ffffff;letter-spacing:-0.317px">None</div>
<div class="t" id="t6" style="left:1565.7px;top:14.0px;font-size:12.5px;line-height:12.5px;font-weight:700;color:#ffffff;letter-spacing:-0.609px">Publish</div>
<div class="t" id="t7" style="left:55.2px;top:56.4px;font-size:12.5px;line-height:12.5px;font-weight:700;color:#161513;letter-spacing:-0.406px">App UIs</div>
<div class="t" id="t8" style="left:91.0px;top:91.4px;font-size:13.5px;line-height:13.5px;font-weight:400;color:#6f6a66;letter-spacing:-0.480px">Filter</div>
<div class="t" id="t9" style="left:115.0px;top:132.9px;font-size:15.5px;line-height:15.5px;font-weight:400;color:#161513;letter-spacing:-0.262px">Create an App UI to add new resources</div>
<div class="t" id="t10" style="left:115.0px;top:151.9px;font-size:15.5px;line-height:15.5px;font-weight:400;color:#161513;letter-spacing:0.000px">to your extension, like pages.</div>
<div class="t" id="t11" style="left:147.1px;top:184.3px;font-size:12.5px;line-height:12.5px;font-weight:700;color:#161513;letter-spacing:-0.456px">App UI</div>
<div class="t" id="t12" style="left:102.2px;top:229.2px;font-size:12.5px;line-height:12.5px;font-weight:400;color:#161513;letter-spacing:-0.156px">Fragments</div>
<div class="t" id="t13" style="left:102.2px;top:259.4px;font-size:12.5px;line-height:12.5px;font-weight:400;color:#161513;letter-spacing:-0.469px">Resources</div>
<div class="t" id="t14" style="left:81.3px;top:311.4px;font-size:12.5px;line-height:12.5px;font-weight:700;color:#161513;letter-spacing:-0.102px">Human Capital Management (HCM)</div>
<div class="t" id="t15" style="left:81.3px;top:363.2px;font-size:12.5px;line-height:12.5px;font-weight:700;color:#161513;letter-spacing:-0.123px">Unified Application</div>
<div class="t" id="t16" style="left:103.0px;top:393.2px;font-size:12.5px;line-height:12.5px;font-weight:400;color:#161513;letter-spacing:0.084px">Application</div>
<div class="t" id="t17" style="left:120.0px;top:423.2px;font-size:12.5px;line-height:12.5px;font-weight:400;color:#161513;letter-spacing:-0.481px">Root Pages</div>
<div class="t" id="t18" style="left:119.2px;top:452.7px;font-size:12.5px;line-height:12.5px;font-weight:400;color:#161513;letter-spacing:-0.026px">redwood</div>
<div class="t" id="t19" style="left:102.2px;top:483.4px;font-size:12.5px;line-height:12.5px;font-weight:400;color:#161513;letter-spacing:-0.156px">Fragments</div>
<div class="t" id="t20" style="left:413.6px;top:53.6px;font-size:12.5px;line-height:12.5px;font-weight:400;color:#5c5752;letter-spacing:0.094px;-webkit-text-stroke:0.35px #5c5752">Getting Started</div>
<div class="t" id="t21" style="left:568.5px;top:53.6px;font-size:12.5px;line-height:12.5px;font-weight:400;color:#5c5752;letter-spacing:0.358px;-webkit-text-stroke:0.35px #5c5752">journey-landing</div>
<div class="t" id="t22" style="left:727.6px;top:53.6px;font-size:12.5px;line-height:12.5px;font-weight:700;color:#161513;letter-spacing:-0.532px">redwood</div>
<div class="t" id="t23" style="left:417.3px;top:92.7px;font-size:12.5px;line-height:12.5px;font-weight:400;color:#56514c;letter-spacing:-0.167px;-webkit-text-stroke:0.35px #56514c">Page Designer</div>
<div class="t" id="t24" style="left:527.7px;top:92.7px;font-size:12.5px;line-height:12.5px;font-weight:400;color:#56514c;letter-spacing:0.031px;-webkit-text-stroke:0.35px #56514c">Action Chains</div>
<div class="t" id="t25" style="left:633.4px;top:92.7px;font-size:12.5px;line-height:12.5px;font-weight:400;color:#56514c;letter-spacing:0.016px;-webkit-text-stroke:0.35px #56514c">Event Listeners</div>
<div class="t" id="t26" style="left:749.3px;top:92.7px;font-size:12.5px;line-height:12.5px;font-weight:400;color:#56514c;letter-spacing:-0.144px;-webkit-text-stroke:0.35px #56514c">Events</div>
<div class="t" id="t27" style="left:818.2px;top:92.7px;font-size:12.5px;line-height:12.5px;font-weight:400;color:#56514c;letter-spacing:-0.140px;-webkit-text-stroke:0.35px #56514c">Types</div>
<div class="t" id="t28" style="left:881.0px;top:92.7px;font-size:12.5px;line-height:12.5px;font-weight:400;color:#56514c;letter-spacing:-0.023px;-webkit-text-stroke:0.35px #56514c">Variables</div>
<div class="t" id="t29" style="left:934.3px;top:94.4px;font-size:10.5px;line-height:10.5px;font-weight:400;color:#6f6a66;letter-spacing:0.178px">(2)</div>
<div class="t" id="t30" style="left:976.9px;top:92.7px;font-size:12.5px;line-height:12.5px;font-weight:400;color:#161513;letter-spacing:0.049px;-webkit-text-stroke:0.35px #161513">JavaScript</div>
<div class="t" id="t31" style="left:1064.5px;top:92.7px;font-size:12.5px;line-height:12.5px;font-weight:400;color:#56514c;letter-spacing:-0.615px;-webkit-text-stroke:0.35px #56514c">JSON</div>
<div class="t" id="t32" style="left:1125.5px;top:92.7px;font-size:12.5px;line-height:12.5px;font-weight:400;color:#56514c;letter-spacing:0.175px;-webkit-text-stroke:0.35px #56514c">Settings</div>
<div class="t" id="t33" style="left:38.4px;top:903.4px;font-size:12.5px;line-height:12.5px;font-weight:400;color:#5c5752;letter-spacing:0.050px">Audits</div>
<div class="t" id="t34" style="left:125.4px;top:903.4px;font-size:12.5px;line-height:12.5px;font-weight:400;color:#5c5752;letter-spacing:-0.216px">Find in Files</div>
<div class="t" id="t35" style="left:242.4px;top:903.4px;font-size:12.5px;line-height:12.5px;font-weight:400;color:#5c5752;letter-spacing:-0.170px">Logs</div>
<div class="t" id="t36" style="left:323.3px;top:903.4px;font-size:12.5px;line-height:12.5px;font-weight:400;color:#5c5752;letter-spacing:-0.297px">Tests</div>
<div class="t" id="t37" style="left:404.0px;top:903.4px;font-size:12.5px;line-height:12.5px;font-weight:400;color:#5c5752;letter-spacing:-0.034px">Git History</div>
</body></html>
